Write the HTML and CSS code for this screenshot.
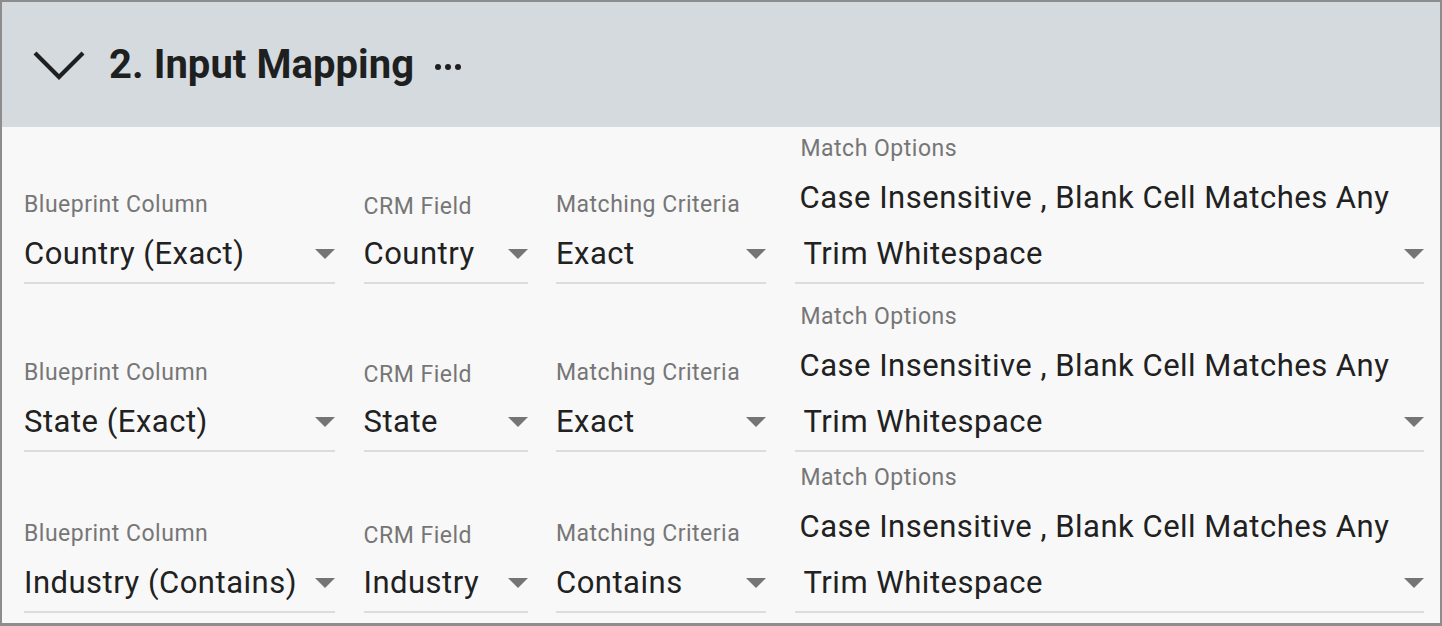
FILE: index.html
```html
<!DOCTYPE html>
<html>
<head>
<meta charset="utf-8">
<link rel="stylesheet" href="styles.css">
</head>
<body>
<div class="panel">
  <div class="header">
    <svg class="chevron" width="52" height="30" viewBox="0 0 52 30"><path d="M2 2 L26 26 L50 2" fill="none" stroke="#1e1f21" stroke-width="4.2"/></svg>
    <h2 class="title">2. Input Mapping</h2>
    <span class="more"><i></i><i></i><i></i></span>
  </div>
  <div class="content">
    <div class="row">
      <div class="field f1"><div class="label">Blueprint Column</div><div class="value"><span>Country (Exact)</span><b class="arrow"></b></div></div>
      <div class="field f2"><div class="label lower">CRM Field</div><div class="value"><span>Country</span><b class="arrow"></b></div></div>
      <div class="field f3"><div class="label">Matching Criteria</div><div class="value"><span>Exact</span><b class="arrow"></b></div></div>
      <div class="field f4"><div class="label">Match Options</div><div class="value multi"><div class="line">Case Insensitive , Blank Cell Matches Any</div><div class="line second"><span>Trim Whitespace</span><b class="arrow"></b></div></div></div>
    </div>
    <div class="row">
      <div class="field f1"><div class="label">Blueprint Column</div><div class="value"><span>State (Exact)</span><b class="arrow"></b></div></div>
      <div class="field f2"><div class="label lower">CRM Field</div><div class="value"><span>State</span><b class="arrow"></b></div></div>
      <div class="field f3"><div class="label">Matching Criteria</div><div class="value"><span>Exact</span><b class="arrow"></b></div></div>
      <div class="field f4"><div class="label">Match Options</div><div class="value multi"><div class="line">Case Insensitive , Blank Cell Matches Any</div><div class="line second"><span>Trim Whitespace</span><b class="arrow"></b></div></div></div>
    </div>
    <div class="row last">
      <div class="field f1"><div class="label">Blueprint Column</div><div class="value"><span>Industry (Contains)</span><b class="arrow"></b></div></div>
      <div class="field f2"><div class="label lower">CRM Field</div><div class="value"><span>Industry</span><b class="arrow"></b></div></div>
      <div class="field f3"><div class="label">Matching Criteria</div><div class="value"><span>Contains</span><b class="arrow"></b></div></div>
      <div class="field f4"><div class="label">Match Options</div><div class="value multi"><div class="line">Case Insensitive , Blank Cell Matches Any</div><div class="line second"><span>Trim Whitespace</span><b class="arrow"></b></div></div></div>
    </div>
  </div>
</div>
</body>
</html>
```
FILE: styles.css
```css
* { box-sizing: border-box; }
html, body { margin: 0; padding: 0; }
body {
  font-family: Roboto, "Liberation Sans", sans-serif;
  background: #f8f8f8;
  width: 1442px;
  height: 626px;
  overflow: hidden;
}
.panel {
  width: 1442px;
  height: 626px;
  border: 2px solid #8d8d8d;
  border-bottom-width: 3px;
  background: #f8f8f8;
  overflow: hidden;
}
.header {
  height: 125px;
  background: #d5dade;
  display: flex;
  align-items: center;
  padding-left: 31px;
}
.chevron { display: block; margin-top: 2px; }
.title {
  margin: 0 0 0 24px;
  font-size: 40px;
  font-weight: 700;
  color: #1e1f21;
  line-height: 48px;
  letter-spacing: 0.05px;
}
.more {
  display: flex;
  gap: 4px;
  margin-left: 21px;
  margin-top: 4px;
}
.more i {
  display: block;
  width: 6px;
  height: 6px;
  border-radius: 50%;
  background: #1e1f21;
}
.content {
  padding: 10px 0 0 22px;
}
.row {
  display: grid;
  grid-template-columns: 311px 164px 210px 629px;
  column-gap: 28.5px;
  align-items: end;
  margin-bottom: 21px;
}
.row.last { margin-top: -7px; }
.field {
  border-bottom: 2px solid #dcdcdc;
}
.label {
  font-size: 23px;
  line-height: 24px;
  letter-spacing: 0.5px;
  color: #767676;
  margin-bottom: 9px;
  white-space: nowrap;
}
.f4 .label { padding-left: 6px; }
.label.lower { transform: translateY(2px); }
.value {
  display: flex;
  align-items: center;
  justify-content: space-between;
  font-size: 31px;
  line-height: 56px;
  height: 56px;
  letter-spacing: 0.5px;
  color: #212121;
  white-space: nowrap;
}
.value.multi {
  display: block;
  height: auto;
  padding-left: 5px;
}
.line.second {
  display: flex;
  align-items: center;
  justify-content: space-between;
  padding-left: 4px;
}
.arrow {
  display: block;
  width: 0;
  height: 0;
  border-left: 10px solid transparent;
  border-right: 10px solid transparent;
  border-top: 10px solid #757575;
  flex: none;
}
```
